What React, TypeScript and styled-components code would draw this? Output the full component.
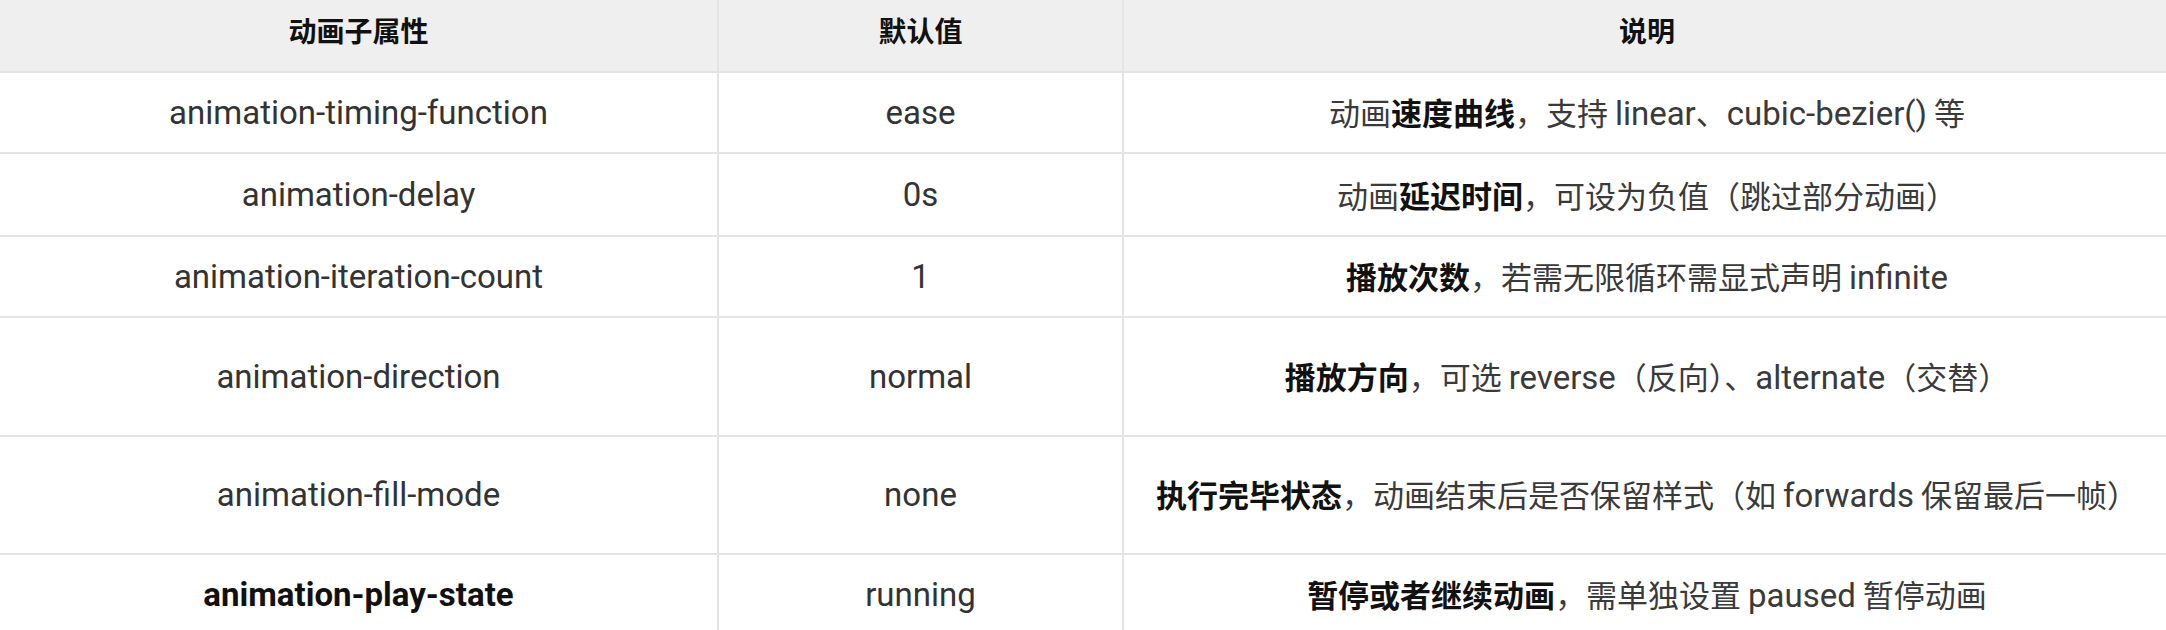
import React from 'react';
import styled, { createGlobalStyle } from 'styled-components';

const GlobalStyle = createGlobalStyle`
  html, body {
    margin: 0;
    padding: 0;
    background: #ffffff;
  }
  body {
    font-family: "Noto Sans CJK SC", sans-serif;
    overflow: hidden;
  }
`;

const Table = styled.table`
  width: 2166px;
  border-collapse: collapse;
  table-layout: fixed;
  color: #333333;
`;

const HeadRow = styled.tr`
  height: 72px;
  background: #efefef;
`;

const HeadCell = styled.th<{ $w: number }>`
  width: ${(p) => p.$w}px;
  padding: 0 0 12px;
  font-family: "Noto Sans CJK SC", sans-serif;
  font-size: 28px;
  font-weight: 700;
  color: #111111;
  text-align: center;
  vertical-align: middle;
  border-left: 2px solid #e4e4e4;
  border-bottom: 2px solid #e4e4e4;

  &:first-child {
    border-left: none;
  }
`;

const Row = styled.tr<{ $h: number }>`
  height: ${(p) => p.$h}px;
`;

// first two columns hold latin only, the latin face runs larger than the CJK one
const Cell = styled.td<{ $bold?: boolean }>`
  padding: 0 16px;
  text-align: center;
  vertical-align: middle;
  font-family: Roboto, "Noto Sans CJK SC", sans-serif;
  font-size: 33px;
  line-height: 40px;
  font-weight: ${(p) => (p.$bold ? 700 : 400)};
  color: ${(p) => (p.$bold ? '#111111' : '#333333')};
  border-left: 2px solid #e4e4e4;
  border-bottom: 2px solid #e4e4e4;
  white-space: nowrap;

  &:first-child {
    border-left: none;
  }
`;

const NoteCell = styled(Cell)`
  font-family: "Noto Sans CJK SC", sans-serif;
  font-size: 31px;
  color: #3a3a3a;
`;

const Term = styled.span`
  font-family: Roboto, sans-serif;
  font-size: 33px;
`;

const Strong = styled.b`
  font-weight: 700;
  color: #111111;
`;

type Item = {
  name: string;
  value: string;
  note: React.ReactNode;
  height: number;
  bold?: boolean;
};

const rows: Item[] = [
  {
    name: 'animation-timing-function',
    value: 'ease',
    note: (
      <>
        动画<Strong>速度曲线</Strong>，支持 <Term>linear</Term>、<Term>cubic-bezier()</Term> 等
      </>
    ),
    height: 81,
  },
  {
    name: 'animation-delay',
    value: '0s',
    note: (
      <>
        动画<Strong>延迟时间</Strong>，可设为负值（跳过部分动画）
      </>
    ),
    height: 83,
  },
  {
    name: 'animation-iteration-count',
    value: '1',
    note: (
      <>
        <Strong>播放次数</Strong>，若需无限循环需显式声明 <Term>infinite</Term>
      </>
    ),
    height: 81,
  },
  {
    name: 'animation-direction',
    value: 'normal',
    note: (
      <>
        <Strong>播放方向</Strong>，可选 <Term>reverse</Term>（反向）、<Term>alternate</Term>（交替）
      </>
    ),
    height: 119,
  },
  {
    name: 'animation-fill-mode',
    value: 'none',
    note: (
      <>
        <Strong>执行完毕状态</Strong>，动画结束后是否保留样式（如 <Term>forwards</Term> 保留最后一帧）
      </>
    ),
    height: 118,
  },
  {
    name: 'animation-play-state',
    value: 'running',
    note: (
      <>
        <Strong>暂停或者继续动画</Strong>，需单独设置 <Term>paused</Term> 暂停动画
      </>
    ),
    height: 82,
    bold: true,
  },
];

const App: React.FC = () => {
  return (
    <>
      <GlobalStyle />
      <Table>
        <thead>
          <HeadRow>
            <HeadCell $w={717}>动画子属性</HeadCell>
            <HeadCell $w={403}>默认值</HeadCell>
            <HeadCell $w={1046}>说明</HeadCell>
          </HeadRow>
        </thead>
        <tbody>
          {rows.map((r) => (
            <Row key={r.name} $h={r.height}>
              <Cell $bold={r.bold}>{r.name}</Cell>
              <Cell>{r.value}</Cell>
              <NoteCell>{r.note}</NoteCell>
            </Row>
          ))}
        </tbody>
      </Table>
    </>
  );
};

export default App;
